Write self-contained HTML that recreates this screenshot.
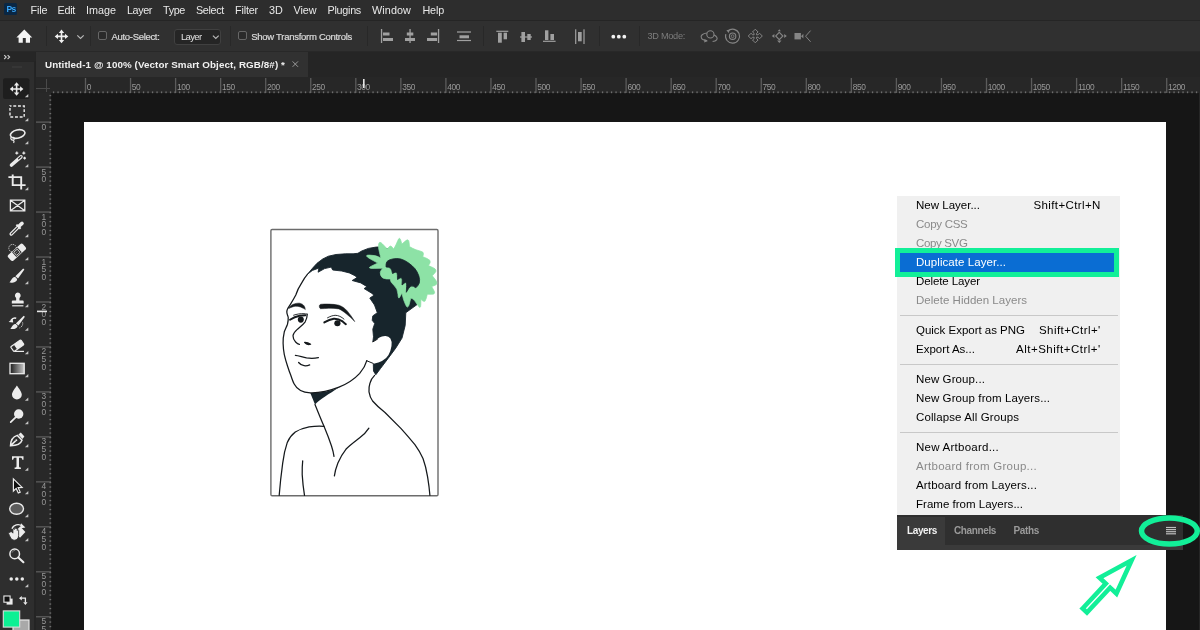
<!DOCTYPE html><html><head><meta charset="utf-8"><title>Photoshop</title><style>
*{margin:0;padding:0;box-sizing:border-box}
html,body{width:1200px;height:630px;overflow:hidden;background:#fff}
body{position:relative;font-family:"Liberation Sans",sans-serif;font-size:11px;color:#ddd}
#root{position:absolute;left:0;top:0;width:1200px;height:630px;will-change:transform}
.a{position:absolute}
.t{position:absolute;white-space:nowrap;line-height:1}
svg{position:absolute;overflow:visible}
#menubar{left:0;top:0;width:1200px;height:20px;background:#2d2d2d}
#menuline{left:0;top:20px;width:1200px;height:1px;background:#252525}
#opt{left:0;top:21px;width:1200px;height:30px;background:#303030}
#optline{left:0;top:51px;width:1200px;height:1px;background:#282828}
#tabbar{left:0;top:52px;width:1200px;height:25px;background:#252525}
#tab{left:36px;top:52px;width:272px;height:25px;background:#313131}
#tools{left:0;top:62px;width:35px;height:568px;background:#2e2e2e}
#canvas{left:35px;top:77px;width:1165px;height:553px;background:#161616}
#hr{left:35px;top:77px;width:1165px;height:16px;background:#272727}
#vr{left:35px;top:93px;width:16px;height:537px;background:#282828}
#doc{left:84px;top:122px;width:1082px;height:508px;background:#fff}
.sep{position:absolute;top:26px;width:1px;height:20px;background:#282828}
.cb{position:absolute;width:9px;height:8.6px;border:1px solid #666;border-radius:2px;top:31.4px;background:#2a2a2a}
#dd{left:173.7px;top:28.6px;width:47.8px;height:16.6px;background:#252525;border:1px solid #404040;border-radius:3px}
#pm{left:897px;top:195.5px;width:222.5px;height:320.5px;background:#f0f0f0}
.ps{position:absolute;left:899.5px;width:218px;height:1px;background:#c8c8c8}
#hl{left:894.7px;top:248.2px;width:224.3px;height:28.8px;background:#0a6dd3;border:5px solid #12ef98}
#lp{left:897px;top:515px;width:285.5px;height:34.5px;background:#2f2f2f}
#lpb{left:897px;top:545px;width:285.5px;height:4.5px;background:#3a3a3a}
#lt{left:897px;top:517px;width:48px;height:28px;background:#3a3a3a}
</style></head><body><div id="root">
<div class="a" id="menubar"></div><div class="a" id="menuline"></div><div class="a" id="opt"></div><div class="a" id="optline"></div>
<div class="a" id="tabbar"></div><div class="a" id="tab"></div><div class="a" id="canvas"></div><div class="a" id="hr"></div><div class="a" id="vr"></div><div class="a" id="tools"></div><div class="a" id="doc"></div>
<div class="a" style="left:4.2px;top:2.8px;width:13px;height:12.4px;background:#0a2744;border-radius:1.5px"></div>
<span class="t" style="left:6.60px;top:4.95px;font-size:8.5px;color:#38a6f8;letter-spacing:-0.798px;font-weight:bold;">Ps</span>
<span class="t" style="left:30.50px;top:4.52px;font-size:10.8px;color:#e8e8e8;letter-spacing:-0.100px;">File</span>
<span class="t" style="left:57.50px;top:4.52px;font-size:10.8px;color:#e8e8e8;letter-spacing:-0.277px;">Edit</span>
<span class="t" style="left:86.00px;top:4.52px;font-size:10.8px;color:#e8e8e8;letter-spacing:-0.003px;">Image</span>
<span class="t" style="left:127.00px;top:4.52px;font-size:10.8px;color:#e8e8e8;letter-spacing:-0.403px;">Layer</span>
<span class="t" style="left:163.00px;top:4.52px;font-size:10.8px;color:#e8e8e8;letter-spacing:-0.353px;">Type</span>
<span class="t" style="left:196.00px;top:4.52px;font-size:10.8px;color:#e8e8e8;letter-spacing:-0.336px;">Select</span>
<span class="t" style="left:235.00px;top:4.52px;font-size:10.8px;color:#e8e8e8;letter-spacing:-0.166px;">Filter</span>
<span class="t" style="left:269.00px;top:4.52px;font-size:10.8px;color:#e8e8e8;letter-spacing:0.097px;">3D</span>
<span class="t" style="left:293.50px;top:4.52px;font-size:10.8px;color:#e8e8e8;letter-spacing:-0.053px;">View</span>
<span class="t" style="left:327.50px;top:4.52px;font-size:10.8px;color:#e8e8e8;letter-spacing:-0.274px;">Plugins</span>
<span class="t" style="left:372.00px;top:4.52px;font-size:10.8px;color:#e8e8e8;letter-spacing:0.098px;">Window</span>
<span class="t" style="left:422.50px;top:4.52px;font-size:10.8px;color:#e8e8e8;letter-spacing:-0.178px;">Help</span>
<div class="sep" style="left:46px"></div>
<div class="sep" style="left:90px"></div>
<div class="sep" style="left:229.5px"></div>
<div class="sep" style="left:367px"></div>
<div class="sep" style="left:483px"></div>
<div class="sep" style="left:598.5px"></div>
<div class="sep" style="left:639px"></div>
<div class="cb" style="left:98px"></div><div class="cb" style="left:238px"></div>
<span class="t" style="left:111.50px;top:31.76px;font-size:9.5px;color:#dadada;letter-spacing:-0.312px;-webkit-text-stroke:0.2px #dadada;">Auto-Select:</span>
<div class="a" id="dd"></div>
<span class="t" style="left:180.90px;top:32.36px;font-size:9.5px;color:#e2e2e2;letter-spacing:-0.612px;">Layer</span>
<span class="t" style="left:251.30px;top:31.76px;font-size:9.5px;color:#dadada;letter-spacing:-0.281px;-webkit-text-stroke:0.2px #dadada;">Show Transform Controls</span>
<span class="t" style="left:647.50px;top:31.91px;font-size:9.2px;color:#7c7c7c;letter-spacing:-0.298px;">3D Mode:</span>
<span class="t" style="left:45.00px;top:59.91px;font-size:9.8px;color:#f0f0f0;letter-spacing:0.091px;font-weight:bold;">Untitled-1 @ 100% (Vector Smart Object, RGB/8#) *</span>
<svg class="a" style="left:0;top:0" width="1200" height="630" viewBox="0 0 1200 630"><g stroke="#5c5c5c" stroke-width="1.3"><line x1="85.50" y1="78" x2="85.50" y2="93"/><line x1="130.55" y1="78" x2="130.55" y2="93"/><line x1="175.60" y1="78" x2="175.60" y2="93"/><line x1="220.65" y1="78" x2="220.65" y2="93"/><line x1="265.70" y1="78" x2="265.70" y2="93"/><line x1="310.75" y1="78" x2="310.75" y2="93"/><line x1="355.80" y1="78" x2="355.80" y2="93"/><line x1="400.85" y1="78" x2="400.85" y2="93"/><line x1="445.90" y1="78" x2="445.90" y2="93"/><line x1="490.95" y1="78" x2="490.95" y2="93"/><line x1="536.00" y1="78" x2="536.00" y2="93"/><line x1="581.05" y1="78" x2="581.05" y2="93"/><line x1="626.10" y1="78" x2="626.10" y2="93"/><line x1="671.15" y1="78" x2="671.15" y2="93"/><line x1="716.20" y1="78" x2="716.20" y2="93"/><line x1="761.25" y1="78" x2="761.25" y2="93"/><line x1="806.30" y1="78" x2="806.30" y2="93"/><line x1="851.35" y1="78" x2="851.35" y2="93"/><line x1="896.40" y1="78" x2="896.40" y2="93"/><line x1="941.45" y1="78" x2="941.45" y2="93"/><line x1="986.50" y1="78" x2="986.50" y2="93"/><line x1="1031.55" y1="78" x2="1031.55" y2="93"/><line x1="1076.60" y1="78" x2="1076.60" y2="93"/><line x1="1121.65" y1="78" x2="1121.65" y2="93"/><line x1="1166.70" y1="78" x2="1166.70" y2="93"/><line x1="36" y1="122.10" x2="51" y2="122.10"/><line x1="36" y1="167.07" x2="51" y2="167.07"/><line x1="36" y1="212.04" x2="51" y2="212.04"/><line x1="36" y1="257.01" x2="51" y2="257.01"/><line x1="36" y1="301.98" x2="51" y2="301.98"/><line x1="36" y1="346.95" x2="51" y2="346.95"/><line x1="36" y1="391.92" x2="51" y2="391.92"/><line x1="36" y1="436.89" x2="51" y2="436.89"/><line x1="36" y1="481.86" x2="51" y2="481.86"/><line x1="36" y1="526.83" x2="51" y2="526.83"/><line x1="36" y1="571.80" x2="51" y2="571.80"/><line x1="36" y1="616.77" x2="51" y2="616.77"/></g><g fill="#6e6e6e"><rect x="52.9" y="91.4" width="1.3" height="1.8"/><rect x="57.4" y="91.4" width="1.3" height="1.8"/><rect x="61.9" y="91.4" width="1.3" height="1.8"/><rect x="66.4" y="91.4" width="1.3" height="1.8"/><rect x="70.9" y="91.4" width="1.3" height="1.8"/><rect x="75.4" y="91.4" width="1.3" height="1.8"/><rect x="79.9" y="91.4" width="1.3" height="1.8"/><rect x="84.4" y="91.4" width="1.3" height="1.8"/><rect x="88.9" y="91.4" width="1.3" height="1.8"/><rect x="93.4" y="91.4" width="1.3" height="1.8"/><rect x="97.9" y="91.4" width="1.3" height="1.8"/><rect x="102.4" y="91.4" width="1.3" height="1.8"/><rect x="106.9" y="91.4" width="1.3" height="1.8"/><rect x="111.4" y="91.4" width="1.3" height="1.8"/><rect x="115.9" y="91.4" width="1.3" height="1.8"/><rect x="120.4" y="91.4" width="1.3" height="1.8"/><rect x="124.9" y="91.4" width="1.3" height="1.8"/><rect x="129.4" y="91.4" width="1.3" height="1.8"/><rect x="133.9" y="91.4" width="1.3" height="1.8"/><rect x="138.4" y="91.4" width="1.3" height="1.8"/><rect x="142.9" y="91.4" width="1.3" height="1.8"/><rect x="147.4" y="91.4" width="1.3" height="1.8"/><rect x="151.9" y="91.4" width="1.3" height="1.8"/><rect x="156.4" y="91.4" width="1.3" height="1.8"/><rect x="160.9" y="91.4" width="1.3" height="1.8"/><rect x="165.4" y="91.4" width="1.3" height="1.8"/><rect x="169.9" y="91.4" width="1.3" height="1.8"/><rect x="174.4" y="91.4" width="1.3" height="1.8"/><rect x="178.9" y="91.4" width="1.3" height="1.8"/><rect x="183.4" y="91.4" width="1.3" height="1.8"/><rect x="187.9" y="91.4" width="1.3" height="1.8"/><rect x="192.4" y="91.4" width="1.3" height="1.8"/><rect x="196.9" y="91.4" width="1.3" height="1.8"/><rect x="201.4" y="91.4" width="1.3" height="1.8"/><rect x="205.9" y="91.4" width="1.3" height="1.8"/><rect x="210.4" y="91.4" width="1.3" height="1.8"/><rect x="214.9" y="91.4" width="1.3" height="1.8"/><rect x="219.4" y="91.4" width="1.3" height="1.8"/><rect x="223.9" y="91.4" width="1.3" height="1.8"/><rect x="228.4" y="91.4" width="1.3" height="1.8"/><rect x="232.9" y="91.4" width="1.3" height="1.8"/><rect x="237.4" y="91.4" width="1.3" height="1.8"/><rect x="241.9" y="91.4" width="1.3" height="1.8"/><rect x="246.4" y="91.4" width="1.3" height="1.8"/><rect x="250.9" y="91.4" width="1.3" height="1.8"/><rect x="255.4" y="91.4" width="1.3" height="1.8"/><rect x="259.9" y="91.4" width="1.3" height="1.8"/><rect x="264.4" y="91.4" width="1.3" height="1.8"/><rect x="268.9" y="91.4" width="1.3" height="1.8"/><rect x="273.4" y="91.4" width="1.3" height="1.8"/><rect x="277.9" y="91.4" width="1.3" height="1.8"/><rect x="282.4" y="91.4" width="1.3" height="1.8"/><rect x="286.9" y="91.4" width="1.3" height="1.8"/><rect x="291.4" y="91.4" width="1.3" height="1.8"/><rect x="295.9" y="91.4" width="1.3" height="1.8"/><rect x="300.4" y="91.4" width="1.3" height="1.8"/><rect x="304.9" y="91.4" width="1.3" height="1.8"/><rect x="309.4" y="91.4" width="1.3" height="1.8"/><rect x="313.9" y="91.4" width="1.3" height="1.8"/><rect x="318.4" y="91.4" width="1.3" height="1.8"/><rect x="322.9" y="91.4" width="1.3" height="1.8"/><rect x="327.4" y="91.4" width="1.3" height="1.8"/><rect x="331.9" y="91.4" width="1.3" height="1.8"/><rect x="336.4" y="91.4" width="1.3" height="1.8"/><rect x="340.9" y="91.4" width="1.3" height="1.8"/><rect x="345.4" y="91.4" width="1.3" height="1.8"/><rect x="349.9" y="91.4" width="1.3" height="1.8"/><rect x="354.4" y="91.4" width="1.3" height="1.8"/><rect x="358.9" y="91.4" width="1.3" height="1.8"/><rect x="363.4" y="91.4" width="1.3" height="1.8"/><rect x="367.9" y="91.4" width="1.3" height="1.8"/><rect x="372.4" y="91.4" width="1.3" height="1.8"/><rect x="376.9" y="91.4" width="1.3" height="1.8"/><rect x="381.4" y="91.4" width="1.3" height="1.8"/><rect x="385.9" y="91.4" width="1.3" height="1.8"/><rect x="390.4" y="91.4" width="1.3" height="1.8"/><rect x="394.9" y="91.4" width="1.3" height="1.8"/><rect x="399.4" y="91.4" width="1.3" height="1.8"/><rect x="403.9" y="91.4" width="1.3" height="1.8"/><rect x="408.4" y="91.4" width="1.3" height="1.8"/><rect x="412.9" y="91.4" width="1.3" height="1.8"/><rect x="417.4" y="91.4" width="1.3" height="1.8"/><rect x="421.9" y="91.4" width="1.3" height="1.8"/><rect x="426.4" y="91.4" width="1.3" height="1.8"/><rect x="430.9" y="91.4" width="1.3" height="1.8"/><rect x="435.4" y="91.4" width="1.3" height="1.8"/><rect x="439.9" y="91.4" width="1.3" height="1.8"/><rect x="444.4" y="91.4" width="1.3" height="1.8"/><rect x="448.9" y="91.4" width="1.3" height="1.8"/><rect x="453.4" y="91.4" width="1.3" height="1.8"/><rect x="457.9" y="91.4" width="1.3" height="1.8"/><rect x="462.4" y="91.4" width="1.3" height="1.8"/><rect x="466.9" y="91.4" width="1.3" height="1.8"/><rect x="471.4" y="91.4" width="1.3" height="1.8"/><rect x="475.9" y="91.4" width="1.3" height="1.8"/><rect x="480.4" y="91.4" width="1.3" height="1.8"/><rect x="484.9" y="91.4" width="1.3" height="1.8"/><rect x="489.4" y="91.4" width="1.3" height="1.8"/><rect x="493.9" y="91.4" width="1.3" height="1.8"/><rect x="498.4" y="91.4" width="1.3" height="1.8"/><rect x="502.9" y="91.4" width="1.3" height="1.8"/><rect x="507.4" y="91.4" width="1.3" height="1.8"/><rect x="511.9" y="91.4" width="1.3" height="1.8"/><rect x="516.4" y="91.4" width="1.3" height="1.8"/><rect x="520.9" y="91.4" width="1.3" height="1.8"/><rect x="525.4" y="91.4" width="1.3" height="1.8"/><rect x="529.9" y="91.4" width="1.3" height="1.8"/><rect x="534.4" y="91.4" width="1.3" height="1.8"/><rect x="538.9" y="91.4" width="1.3" height="1.8"/><rect x="543.4" y="91.4" width="1.3" height="1.8"/><rect x="547.9" y="91.4" width="1.3" height="1.8"/><rect x="552.4" y="91.4" width="1.3" height="1.8"/><rect x="556.9" y="91.4" width="1.3" height="1.8"/><rect x="561.4" y="91.4" width="1.3" height="1.8"/><rect x="565.9" y="91.4" width="1.3" height="1.8"/><rect x="570.4" y="91.4" width="1.3" height="1.8"/><rect x="574.9" y="91.4" width="1.3" height="1.8"/><rect x="579.4" y="91.4" width="1.3" height="1.8"/><rect x="583.9" y="91.4" width="1.3" height="1.8"/><rect x="588.4" y="91.4" width="1.3" height="1.8"/><rect x="592.9" y="91.4" width="1.3" height="1.8"/><rect x="597.4" y="91.4" width="1.3" height="1.8"/><rect x="601.9" y="91.4" width="1.3" height="1.8"/><rect x="606.4" y="91.4" width="1.3" height="1.8"/><rect x="610.9" y="91.4" width="1.3" height="1.8"/><rect x="615.4" y="91.4" width="1.3" height="1.8"/><rect x="619.9" y="91.4" width="1.3" height="1.8"/><rect x="624.4" y="91.4" width="1.3" height="1.8"/><rect x="628.9" y="91.4" width="1.3" height="1.8"/><rect x="633.4" y="91.4" width="1.3" height="1.8"/><rect x="637.9" y="91.4" width="1.3" height="1.8"/><rect x="642.4" y="91.4" width="1.3" height="1.8"/><rect x="646.9" y="91.4" width="1.3" height="1.8"/><rect x="651.4" y="91.4" width="1.3" height="1.8"/><rect x="655.9" y="91.4" width="1.3" height="1.8"/><rect x="660.4" y="91.4" width="1.3" height="1.8"/><rect x="664.9" y="91.4" width="1.3" height="1.8"/><rect x="669.4" y="91.4" width="1.3" height="1.8"/><rect x="673.9" y="91.4" width="1.3" height="1.8"/><rect x="678.4" y="91.4" width="1.3" height="1.8"/><rect x="682.9" y="91.4" width="1.3" height="1.8"/><rect x="687.4" y="91.4" width="1.3" height="1.8"/><rect x="691.9" y="91.4" width="1.3" height="1.8"/><rect x="696.4" y="91.4" width="1.3" height="1.8"/><rect x="700.9" y="91.4" width="1.3" height="1.8"/><rect x="705.4" y="91.4" width="1.3" height="1.8"/><rect x="709.9" y="91.4" width="1.3" height="1.8"/><rect x="714.4" y="91.4" width="1.3" height="1.8"/><rect x="718.9" y="91.4" width="1.3" height="1.8"/><rect x="723.4" y="91.4" width="1.3" height="1.8"/><rect x="727.9" y="91.4" width="1.3" height="1.8"/><rect x="732.4" y="91.4" width="1.3" height="1.8"/><rect x="736.9" y="91.4" width="1.3" height="1.8"/><rect x="741.4" y="91.4" width="1.3" height="1.8"/><rect x="745.9" y="91.4" width="1.3" height="1.8"/><rect x="750.4" y="91.4" width="1.3" height="1.8"/><rect x="754.9" y="91.4" width="1.3" height="1.8"/><rect x="759.4" y="91.4" width="1.3" height="1.8"/><rect x="763.9" y="91.4" width="1.3" height="1.8"/><rect x="768.4" y="91.4" width="1.3" height="1.8"/><rect x="772.9" y="91.4" width="1.3" height="1.8"/><rect x="777.4" y="91.4" width="1.3" height="1.8"/><rect x="781.9" y="91.4" width="1.3" height="1.8"/><rect x="786.4" y="91.4" width="1.3" height="1.8"/><rect x="790.9" y="91.4" width="1.3" height="1.8"/><rect x="795.4" y="91.4" width="1.3" height="1.8"/><rect x="799.9" y="91.4" width="1.3" height="1.8"/><rect x="804.4" y="91.4" width="1.3" height="1.8"/><rect x="808.9" y="91.4" width="1.3" height="1.8"/><rect x="813.4" y="91.4" width="1.3" height="1.8"/><rect x="817.9" y="91.4" width="1.3" height="1.8"/><rect x="822.4" y="91.4" width="1.3" height="1.8"/><rect x="826.9" y="91.4" width="1.3" height="1.8"/><rect x="831.4" y="91.4" width="1.3" height="1.8"/><rect x="835.9" y="91.4" width="1.3" height="1.8"/><rect x="840.4" y="91.4" width="1.3" height="1.8"/><rect x="844.9" y="91.4" width="1.3" height="1.8"/><rect x="849.4" y="91.4" width="1.3" height="1.8"/><rect x="853.9" y="91.4" width="1.3" height="1.8"/><rect x="858.4" y="91.4" width="1.3" height="1.8"/><rect x="862.9" y="91.4" width="1.3" height="1.8"/><rect x="867.4" y="91.4" width="1.3" height="1.8"/><rect x="871.9" y="91.4" width="1.3" height="1.8"/><rect x="876.4" y="91.4" width="1.3" height="1.8"/><rect x="880.9" y="91.4" width="1.3" height="1.8"/><rect x="885.4" y="91.4" width="1.3" height="1.8"/><rect x="889.9" y="91.4" width="1.3" height="1.8"/><rect x="894.4" y="91.4" width="1.3" height="1.8"/><rect x="898.9" y="91.4" width="1.3" height="1.8"/><rect x="903.4" y="91.4" width="1.3" height="1.8"/><rect x="907.9" y="91.4" width="1.3" height="1.8"/><rect x="912.4" y="91.4" width="1.3" height="1.8"/><rect x="916.9" y="91.4" width="1.3" height="1.8"/><rect x="921.4" y="91.4" width="1.3" height="1.8"/><rect x="925.9" y="91.4" width="1.3" height="1.8"/><rect x="930.4" y="91.4" width="1.3" height="1.8"/><rect x="934.9" y="91.4" width="1.3" height="1.8"/><rect x="939.4" y="91.4" width="1.3" height="1.8"/><rect x="943.9" y="91.4" width="1.3" height="1.8"/><rect x="948.4" y="91.4" width="1.3" height="1.8"/><rect x="952.9" y="91.4" width="1.3" height="1.8"/><rect x="957.4" y="91.4" width="1.3" height="1.8"/><rect x="961.9" y="91.4" width="1.3" height="1.8"/><rect x="966.4" y="91.4" width="1.3" height="1.8"/><rect x="970.9" y="91.4" width="1.3" height="1.8"/><rect x="975.4" y="91.4" width="1.3" height="1.8"/><rect x="979.9" y="91.4" width="1.3" height="1.8"/><rect x="984.4" y="91.4" width="1.3" height="1.8"/><rect x="988.9" y="91.4" width="1.3" height="1.8"/><rect x="993.4" y="91.4" width="1.3" height="1.8"/><rect x="997.9" y="91.4" width="1.3" height="1.8"/><rect x="1002.4" y="91.4" width="1.3" height="1.8"/><rect x="1006.9" y="91.4" width="1.3" height="1.8"/><rect x="1011.4" y="91.4" width="1.3" height="1.8"/><rect x="1015.9" y="91.4" width="1.3" height="1.8"/><rect x="1020.4" y="91.4" width="1.3" height="1.8"/><rect x="1024.9" y="91.4" width="1.3" height="1.8"/><rect x="1029.4" y="91.4" width="1.3" height="1.8"/><rect x="1033.9" y="91.4" width="1.3" height="1.8"/><rect x="1038.4" y="91.4" width="1.3" height="1.8"/><rect x="1042.9" y="91.4" width="1.3" height="1.8"/><rect x="1047.4" y="91.4" width="1.3" height="1.8"/><rect x="1051.9" y="91.4" width="1.3" height="1.8"/><rect x="1056.4" y="91.4" width="1.3" height="1.8"/><rect x="1060.9" y="91.4" width="1.3" height="1.8"/><rect x="1065.4" y="91.4" width="1.3" height="1.8"/><rect x="1069.9" y="91.4" width="1.3" height="1.8"/><rect x="1074.4" y="91.4" width="1.3" height="1.8"/><rect x="1078.9" y="91.4" width="1.3" height="1.8"/><rect x="1083.4" y="91.4" width="1.3" height="1.8"/><rect x="1087.9" y="91.4" width="1.3" height="1.8"/><rect x="1092.4" y="91.4" width="1.3" height="1.8"/><rect x="1096.9" y="91.4" width="1.3" height="1.8"/><rect x="1101.4" y="91.4" width="1.3" height="1.8"/><rect x="1105.9" y="91.4" width="1.3" height="1.8"/><rect x="1110.4" y="91.4" width="1.3" height="1.8"/><rect x="1114.9" y="91.4" width="1.3" height="1.8"/><rect x="1119.4" y="91.4" width="1.3" height="1.8"/><rect x="1123.9" y="91.4" width="1.3" height="1.8"/><rect x="1128.4" y="91.4" width="1.3" height="1.8"/><rect x="1132.9" y="91.4" width="1.3" height="1.8"/><rect x="1137.4" y="91.4" width="1.3" height="1.8"/><rect x="1141.9" y="91.4" width="1.3" height="1.8"/><rect x="1146.4" y="91.4" width="1.3" height="1.8"/><rect x="1150.9" y="91.4" width="1.3" height="1.8"/><rect x="1155.4" y="91.4" width="1.3" height="1.8"/><rect x="1159.9" y="91.4" width="1.3" height="1.8"/><rect x="1164.4" y="91.4" width="1.3" height="1.8"/><rect x="1168.9" y="91.4" width="1.3" height="1.8"/><rect x="1173.4" y="91.4" width="1.3" height="1.8"/><rect x="1177.9" y="91.4" width="1.3" height="1.8"/><rect x="1182.4" y="91.4" width="1.3" height="1.8"/><rect x="1186.9" y="91.4" width="1.3" height="1.8"/><rect x="1191.4" y="91.4" width="1.3" height="1.8"/><rect x="1195.9" y="91.4" width="1.3" height="1.8"/><rect x="49.4" y="94.9" width="1.8" height="1.3"/><rect x="49.4" y="99.4" width="1.8" height="1.3"/><rect x="49.4" y="103.9" width="1.8" height="1.3"/><rect x="49.4" y="108.4" width="1.8" height="1.3"/><rect x="49.4" y="112.9" width="1.8" height="1.3"/><rect x="49.4" y="117.4" width="1.8" height="1.3"/><rect x="49.4" y="121.9" width="1.8" height="1.3"/><rect x="49.4" y="126.4" width="1.8" height="1.3"/><rect x="49.4" y="130.9" width="1.8" height="1.3"/><rect x="49.4" y="135.4" width="1.8" height="1.3"/><rect x="49.4" y="139.9" width="1.8" height="1.3"/><rect x="49.4" y="144.4" width="1.8" height="1.3"/><rect x="49.4" y="148.9" width="1.8" height="1.3"/><rect x="49.4" y="153.4" width="1.8" height="1.3"/><rect x="49.4" y="157.9" width="1.8" height="1.3"/><rect x="49.4" y="162.4" width="1.8" height="1.3"/><rect x="49.4" y="166.9" width="1.8" height="1.3"/><rect x="49.4" y="171.4" width="1.8" height="1.3"/><rect x="49.4" y="175.9" width="1.8" height="1.3"/><rect x="49.4" y="180.4" width="1.8" height="1.3"/><rect x="49.4" y="184.9" width="1.8" height="1.3"/><rect x="49.4" y="189.4" width="1.8" height="1.3"/><rect x="49.4" y="193.9" width="1.8" height="1.3"/><rect x="49.4" y="198.4" width="1.8" height="1.3"/><rect x="49.4" y="202.9" width="1.8" height="1.3"/><rect x="49.4" y="207.4" width="1.8" height="1.3"/><rect x="49.4" y="211.9" width="1.8" height="1.3"/><rect x="49.4" y="216.4" width="1.8" height="1.3"/><rect x="49.4" y="220.9" width="1.8" height="1.3"/><rect x="49.4" y="225.4" width="1.8" height="1.3"/><rect x="49.4" y="229.9" width="1.8" height="1.3"/><rect x="49.4" y="234.4" width="1.8" height="1.3"/><rect x="49.4" y="238.9" width="1.8" height="1.3"/><rect x="49.4" y="243.4" width="1.8" height="1.3"/><rect x="49.4" y="247.9" width="1.8" height="1.3"/><rect x="49.4" y="252.4" width="1.8" height="1.3"/><rect x="49.4" y="256.9" width="1.8" height="1.3"/><rect x="49.4" y="261.4" width="1.8" height="1.3"/><rect x="49.4" y="265.9" width="1.8" height="1.3"/><rect x="49.4" y="270.4" width="1.8" height="1.3"/><rect x="49.4" y="274.9" width="1.8" height="1.3"/><rect x="49.4" y="279.4" width="1.8" height="1.3"/><rect x="49.4" y="283.9" width="1.8" height="1.3"/><rect x="49.4" y="288.4" width="1.8" height="1.3"/><rect x="49.4" y="292.9" width="1.8" height="1.3"/><rect x="49.4" y="297.4" width="1.8" height="1.3"/><rect x="49.4" y="301.9" width="1.8" height="1.3"/><rect x="49.4" y="306.4" width="1.8" height="1.3"/><rect x="49.4" y="310.9" width="1.8" height="1.3"/><rect x="49.4" y="315.4" width="1.8" height="1.3"/><rect x="49.4" y="319.9" width="1.8" height="1.3"/><rect x="49.4" y="324.4" width="1.8" height="1.3"/><rect x="49.4" y="328.9" width="1.8" height="1.3"/><rect x="49.4" y="333.4" width="1.8" height="1.3"/><rect x="49.4" y="337.9" width="1.8" height="1.3"/><rect x="49.4" y="342.4" width="1.8" height="1.3"/><rect x="49.4" y="346.9" width="1.8" height="1.3"/><rect x="49.4" y="351.4" width="1.8" height="1.3"/><rect x="49.4" y="355.9" width="1.8" height="1.3"/><rect x="49.4" y="360.4" width="1.8" height="1.3"/><rect x="49.4" y="364.9" width="1.8" height="1.3"/><rect x="49.4" y="369.4" width="1.8" height="1.3"/><rect x="49.4" y="373.9" width="1.8" height="1.3"/><rect x="49.4" y="378.4" width="1.8" height="1.3"/><rect x="49.4" y="382.9" width="1.8" height="1.3"/><rect x="49.4" y="387.4" width="1.8" height="1.3"/><rect x="49.4" y="391.9" width="1.8" height="1.3"/><rect x="49.4" y="396.4" width="1.8" height="1.3"/><rect x="49.4" y="400.9" width="1.8" height="1.3"/><rect x="49.4" y="405.4" width="1.8" height="1.3"/><rect x="49.4" y="409.9" width="1.8" height="1.3"/><rect x="49.4" y="414.4" width="1.8" height="1.3"/><rect x="49.4" y="418.9" width="1.8" height="1.3"/><rect x="49.4" y="423.4" width="1.8" height="1.3"/><rect x="49.4" y="427.9" width="1.8" height="1.3"/><rect x="49.4" y="432.4" width="1.8" height="1.3"/><rect x="49.4" y="436.9" width="1.8" height="1.3"/><rect x="49.4" y="441.4" width="1.8" height="1.3"/><rect x="49.4" y="445.9" width="1.8" height="1.3"/><rect x="49.4" y="450.4" width="1.8" height="1.3"/><rect x="49.4" y="454.9" width="1.8" height="1.3"/><rect x="49.4" y="459.4" width="1.8" height="1.3"/><rect x="49.4" y="463.9" width="1.8" height="1.3"/><rect x="49.4" y="468.4" width="1.8" height="1.3"/><rect x="49.4" y="472.9" width="1.8" height="1.3"/><rect x="49.4" y="477.4" width="1.8" height="1.3"/><rect x="49.4" y="481.9" width="1.8" height="1.3"/><rect x="49.4" y="486.4" width="1.8" height="1.3"/><rect x="49.4" y="490.9" width="1.8" height="1.3"/><rect x="49.4" y="495.4" width="1.8" height="1.3"/><rect x="49.4" y="499.9" width="1.8" height="1.3"/><rect x="49.4" y="504.4" width="1.8" height="1.3"/><rect x="49.4" y="508.9" width="1.8" height="1.3"/><rect x="49.4" y="513.4" width="1.8" height="1.3"/><rect x="49.4" y="517.9" width="1.8" height="1.3"/><rect x="49.4" y="522.4" width="1.8" height="1.3"/><rect x="49.4" y="526.9" width="1.8" height="1.3"/><rect x="49.4" y="531.4" width="1.8" height="1.3"/><rect x="49.4" y="535.9" width="1.8" height="1.3"/><rect x="49.4" y="540.4" width="1.8" height="1.3"/><rect x="49.4" y="544.9" width="1.8" height="1.3"/><rect x="49.4" y="549.4" width="1.8" height="1.3"/><rect x="49.4" y="553.9" width="1.8" height="1.3"/><rect x="49.4" y="558.4" width="1.8" height="1.3"/><rect x="49.4" y="562.9" width="1.8" height="1.3"/><rect x="49.4" y="567.4" width="1.8" height="1.3"/><rect x="49.4" y="571.9" width="1.8" height="1.3"/><rect x="49.4" y="576.4" width="1.8" height="1.3"/><rect x="49.4" y="580.9" width="1.8" height="1.3"/><rect x="49.4" y="585.4" width="1.8" height="1.3"/><rect x="49.4" y="589.9" width="1.8" height="1.3"/><rect x="49.4" y="594.4" width="1.8" height="1.3"/><rect x="49.4" y="598.9" width="1.8" height="1.3"/><rect x="49.4" y="603.4" width="1.8" height="1.3"/><rect x="49.4" y="607.9" width="1.8" height="1.3"/><rect x="49.4" y="612.4" width="1.8" height="1.3"/><rect x="49.4" y="616.9" width="1.8" height="1.3"/><rect x="49.4" y="621.4" width="1.8" height="1.3"/><rect x="49.4" y="625.9" width="1.8" height="1.3"/></g><g stroke="#4a4a4a" stroke-width="1"><line x1="36" y1="88.5" x2="50" y2="88.5"/><line x1="46.5" y1="79" x2="46.5" y2="92"/></g><g fill="#989898" font-family="Liberation Sans, sans-serif" font-size="8.4"><text x="86.80" y="89.8" letter-spacing="-0.4">0</text><text x="131.85" y="89.8" letter-spacing="-0.4">50</text><text x="176.90" y="89.8" letter-spacing="-0.4">100</text><text x="221.95" y="89.8" letter-spacing="-0.4">150</text><text x="267.00" y="89.8" letter-spacing="-0.4">200</text><text x="312.05" y="89.8" letter-spacing="-0.4">250</text><text x="357.10" y="89.8" letter-spacing="-0.4">300</text><text x="402.15" y="89.8" letter-spacing="-0.4">350</text><text x="447.20" y="89.8" letter-spacing="-0.4">400</text><text x="492.25" y="89.8" letter-spacing="-0.4">450</text><text x="537.30" y="89.8" letter-spacing="-0.4">500</text><text x="582.35" y="89.8" letter-spacing="-0.4">550</text><text x="627.40" y="89.8" letter-spacing="-0.4">600</text><text x="672.45" y="89.8" letter-spacing="-0.4">650</text><text x="717.50" y="89.8" letter-spacing="-0.4">700</text><text x="762.55" y="89.8" letter-spacing="-0.4">750</text><text x="807.60" y="89.8" letter-spacing="-0.4">800</text><text x="852.65" y="89.8" letter-spacing="-0.4">850</text><text x="897.70" y="89.8" letter-spacing="-0.4">900</text><text x="942.75" y="89.8" letter-spacing="-0.4">950</text><text x="987.80" y="89.8" letter-spacing="-0.4">1000</text><text x="1032.85" y="89.8" letter-spacing="-0.4">1050</text><text x="1077.90" y="89.8" letter-spacing="-0.4">1100</text><text x="1122.95" y="89.8" letter-spacing="-0.4">1150</text><text x="1168.00" y="89.8" letter-spacing="-0.4">1200</text><text x="41.5" y="129.6">0</text><text x="41.5" y="174.6">5</text><text x="41.5" y="182.2">0</text><text x="41.5" y="219.5">1</text><text x="41.5" y="227.2">0</text><text x="41.5" y="234.8">0</text><text x="41.5" y="264.5">1</text><text x="41.5" y="272.2">5</text><text x="41.5" y="279.8">0</text><text x="41.5" y="309.5">2</text><text x="41.5" y="317.1">0</text><text x="41.5" y="324.8">0</text><text x="41.5" y="354.4">2</text><text x="41.5" y="362.1">5</text><text x="41.5" y="369.8">0</text><text x="41.5" y="399.4">3</text><text x="41.5" y="407.1">0</text><text x="41.5" y="414.7">0</text><text x="41.5" y="444.4">3</text><text x="41.5" y="452.0">5</text><text x="41.5" y="459.7">0</text><text x="41.5" y="489.4">4</text><text x="41.5" y="497.0">0</text><text x="41.5" y="504.7">0</text><text x="41.5" y="534.3">4</text><text x="41.5" y="542.0">5</text><text x="41.5" y="549.6">0</text><text x="41.5" y="579.3">5</text><text x="41.5" y="586.9">0</text><text x="41.5" y="594.6">0</text><text x="41.5" y="624.3">5</text><text x="41.5" y="631.9">5</text><text x="41.5" y="639.6">0</text></g><rect x="363" y="79" width="1.6" height="9" fill="#e8e8e8"/><rect x="37" y="310.6" width="10" height="1.6" fill="#e8e8e8"/></svg>
<svg class="a" style="left:0;top:0" width="60" height="630" viewBox="0 0 60 630"><rect x="0" y="52" width="35" height="9.5" fill="#262626"/><rect x="34" y="61.5" width="1.6" height="570" fill="#242424"/><rect x="12" y="66.4" width="10" height="1.2" fill="#3c3c3c"/><rect x="3" y="78.3" width="26.5" height="20.6" rx="2" fill="#1e1e1e"/><path d="M4.2 55.2 l2 1.9 -2 1.9 M7.6 55.2 l2 1.9 -2 1.9" fill="none" stroke="#d0d0d0" stroke-width="1.1"/><path d="M28.3 94 v3.2 h-3.4z" fill="#c4c4c4"/><path d="M28.3 118 v3.2 h-3.4z" fill="#c4c4c4"/><path d="M28.3 141 v3.2 h-3.4z" fill="#c4c4c4"/><path d="M28.3 164 v3.2 h-3.4z" fill="#c4c4c4"/><path d="M28.3 187 v3.2 h-3.4z" fill="#c4c4c4"/><path d="M28.3 234 v3.2 h-3.4z" fill="#c4c4c4"/><path d="M28.3 257 v3.2 h-3.4z" fill="#c4c4c4"/><path d="M28.3 281 v3.2 h-3.4z" fill="#c4c4c4"/><path d="M28.3 304 v3.2 h-3.4z" fill="#c4c4c4"/><path d="M28.3 327.5 v3.2 h-3.4z" fill="#c4c4c4"/><path d="M28.3 351 v3.2 h-3.4z" fill="#c4c4c4"/><path d="M28.3 374 v3.2 h-3.4z" fill="#c4c4c4"/><path d="M28.3 397.5 v3.2 h-3.4z" fill="#c4c4c4"/><path d="M28.3 421 v3.2 h-3.4z" fill="#c4c4c4"/><path d="M28.3 444 v3.2 h-3.4z" fill="#c4c4c4"/><path d="M28.3 467.5 v3.2 h-3.4z" fill="#c4c4c4"/><path d="M28.3 491 v3.2 h-3.4z" fill="#c4c4c4"/><path d="M28.3 514 v3.2 h-3.4z" fill="#c4c4c4"/><path d="M28.3 538 v3.2 h-3.4z" fill="#c4c4c4"/><path d="M28.3 584 v3.2 h-3.4z" fill="#c4c4c4"/><g fill="#ececec" stroke="none"><path d="M16.6 82.2 l2.7 3.3 h-1.9 v2.7 h2.7 v-1.9 l3.3 2.7 -3.3 2.7 v-1.9 h-2.7 v2.7 h1.9 l-2.7 3.3 -2.7-3.3 h1.9 v-2.7 h-2.7 v1.9 l-3.3-2.7 3.3-2.7 v1.9 h2.7 v-2.7 h-1.9z"/><path d="M16.9 385.5 C15.2 388.2 12 391.8 12 394.7 a4.9 4.8 0 0 0 9.8 0 C21.8 391.8 18.6 388.2 16.9 385.5z"/><circle cx="18.7" cy="414" r="4.7"/><circle cx="11.2" cy="579" r="1.75"/><circle cx="16.8" cy="579" r="1.75"/><circle cx="22.3" cy="579" r="1.75"/><path d="M23.2 268.6 l1.2 1 -6.4 8.8 -2.6-2.1z"/><path d="M15.2 277 c-2.6-0.6-3.4 2-5.7 5.6 c3.6 0.5 7.6-0.6 7.6-3.6z"/><path d="M23.7 315.8 l1.2 1 -6.4 8.8 -2.6-2.1z"/><path d="M15.7 324 c-2.4-0.6-3.2 1.8-5.3 5.0 c3.4 0.5 7.2-0.5 7.2-3.3z"/><path d="M8.6 322 l4-3.5 0.6 3.9z"/><path transform="translate(0.8 0)" d="M17 292.6 a2.9 2.9 0 0 1 2 5 c-0.5 0.7-0.6 1.6-0.3 2.8 h3.2 a1 1 0 0 1 1 1 v2.2 h-11.9 v-2.2 a1 1 0 0 1 1-1 h3.3 c0.3-1.2 0.2-2.1-0.3-2.8 a2.9 2.9 0 0 1 2-5z"/><rect x="12.2" y="305.2" width="11.2" height="1.2"/><path d="M12 456.2 h11.5 v3.6 h-1.2 c-0.2-1.4-0.8-2-2-2 h-1.3 v8.4 c0 0.9 0.5 1.3 1.9 1.4 v1.3 h-6.3 v-1.3 c1.4-0.1 1.9-0.5 1.9-1.4 v-8.4 h-1.3 c-1.2 0-1.8 0.6-2 2 h-1.2z"/></g><g fill="none" stroke="#ececec"><rect x="10" y="106" width="14.2" height="11" stroke-width="1.4" stroke-dasharray="2.9 1.8" stroke-dashoffset="1.4"/><ellipse cx="17.7" cy="134" rx="7.4" ry="4.1" transform="rotate(-13 17.7 134)" stroke-width="1.6"/><path d="M11.2 137.2 c-1.2 1.6 0.6 3.6 2.6 2.6 c1.4-0.9 0.4-2.8-1.2-2.2 M13.4 140.2 c0.8 1 0.8 2 0.2 2.8" stroke-width="1.2"/><path d="M11.5 165 L20.9 156.8" stroke-width="3.6" stroke-linecap="round"/><path d="M18.6 158.8 L20.9 156.8" stroke="#2e2e2e" stroke-width="1.3" stroke-linecap="round"/><path d="M16.8 151.6 v3 M15.3 153.1 h3 M23.8 151.6 v3 M22.3 153.1 h3 M24.6 156.8 v2.8 M23.2 158.2 h2.8" stroke-width="1.2"/><path d="M12.7 174.5 V185.1 H25.6 M8.4 177.1 H21.2 V189.6" stroke-width="1.9"/><path d="M10.4 200.2 h14.4 v10.6 h-14.4z M10.4 200.2 l14.4 10.6 M24.8 200.2 l-14.4 10.6" stroke-width="1.3"/><path d="M11.2 234 L17.8 227.4" stroke-width="3.5" stroke-linecap="round"/><path d="M11.4 233.8 L17.6 227.6" stroke="#2e2e2e" stroke-width="1.2" stroke-linecap="round"/><path d="M16.4 224.6 L20.6 228.8" stroke-width="2"/><path d="M19.4 225.8 L22 223.4" stroke-width="3.6" stroke-linecap="round"/><circle cx="12.6" cy="248.2" r="3.8" stroke-width="0.9" stroke-dasharray="1.2 1"/><g transform="rotate(-42 16.9 252.3)"><rect x="7" y="248.5" width="19.8" height="7.6" rx="2" fill="#ececec" stroke="none"/><rect x="13.3" y="249.1" width="7.2" height="6.4" fill="#2e2e2e" stroke="none"/><rect x="14.6" y="250.2" width="4.6" height="4.2" stroke-width="0.8"/><path d="M16.5 252.3 h0.8" stroke-width="0.9"/></g><path d="M11 320.4 c1.2-1.9 3.2-2.6 5.2-2.1" stroke-width="1.5"/><path d="M22.6 322.5 c0.6 2-0.6 4.4-3 5.4" stroke-width="1" stroke-dasharray="1 1"/><g transform="rotate(-35 17.2 345.6)"><rect x="11" y="342.8" width="12.4" height="5.8" rx="0.8" stroke-width="1.2"/><rect x="15" y="342.8" width="8.4" height="5.8" rx="0.8" fill="#ececec" stroke="none"/></g><path d="M14.4 351.4 H24" stroke-width="1.2"/><rect x="10" y="363.3" width="14.2" height="10.4" fill="url(#tg)" stroke-width="1.3"/><path d="M15.6 417.3 L10.7 422.1" stroke-width="1.7" stroke-linecap="round"/><path d="M10.5 445.7 C10.6 441.2 12.6 436.8 17.3 435.4 L22 440.2 C20.6 444.4 16 445.6 10.5 445.7z M10.8 445.4 L15.6 440.9" stroke-width="1.5"/><circle cx="16.3" cy="440.2" r="1" fill="#ececec" stroke="none"/><path d="M18.4 434.4 l2.4-1.9 3.6 4 -2 2.4z" fill="#ececec" stroke="none"/><path d="M13.4 478.9 V491 l2.8-2.6 2.1 4.6 1.9-0.9 -2.1-4.5 4-0.2z" fill="#111" stroke-width="1.2" stroke-linejoin="miter"/><ellipse cx="16.6" cy="508.8" rx="6.9" ry="5.5" fill="#5c5c5c" stroke-width="1.4"/><path d="M12 528.8 C13.4 524.6 18.6 523.4 22.2 526" stroke-width="1.4"/><path d="M21 523.2 l4.4 4.2 -5.4 1.2z" fill="#ececec" stroke="none"/><path d="M20.2 526.6 l5.2 5.3 -5.4 5.9 -5.4-5.7z" fill="#ececec" stroke="none"/><g transform="translate(14.6 534.6) scale(1.22) translate(-14.6 -534.6)"><path d="M11.2 532.4 c0.8-0.4 1.4 0 2 1 v-3 c0-0.8 1.1-0.8 1.2 0 v-1 c0-0.8 1.2-0.8 1.2 0 v0.6 c0-0.8 1.2-0.8 1.2 0 v1.2 c0-0.8 1.1-0.8 1.1 0 v4 c0 2.4-1.4 4-3.4 4 c-1.8 0-2.8-1-3.6-2.8 c-0.6-1.4-1.2-2.6-1.4-3.2z" fill="#ececec" stroke="#2e2e2e" stroke-width="0.7"/></g><circle cx="14.7" cy="553.9" r="4.8" stroke-width="1.5"/><path d="M18.3 557.4 L23.4 562.2" stroke-width="2.1" stroke-linecap="round"/><path d="M12 552.6 c0.6-1.4 1.8-2.2 3.2-2.2" stroke-width="0.8" stroke="#9a9a9a"/></g><rect x="6.6" y="598.6" width="6" height="6" fill="#ececec"/><rect x="3.9" y="596" width="6.2" height="6.2" fill="#111" stroke="#ececec" stroke-width="1.1"/><path d="M21.4 598.2 h4 v4.4" fill="none" stroke="#ececec" stroke-width="1.3"/><path d="M19 598.2 l2.8-2.2 v4.4z M25.4 605 l-2.2-2.8 h4.4z" fill="#ececec"/><rect x="13" y="620" width="16" height="16" fill="#a9a9a9" stroke="#e6e6e6" stroke-width="1.2"/><rect x="3.3" y="610.9" width="16.4" height="16.2" fill="#0df094" stroke="#dcdcdc" stroke-width="1.1"/><defs><linearGradient id="tg" x1="0" x2="1" y1="0" y2="0"><stop offset="0" stop-color="#1c1c1c"/><stop offset="1" stop-color="#c8c8c8"/></linearGradient></defs></svg>
<svg class="a" style="left:0;top:0" width="1200" height="80" viewBox="0 0 1200 80"><path d="M24.3 29.6 L32.2 37.6 H30 V42.8 H25.8 V38 H22.8 V42.8 H18.6 V37.6 H16.4z" fill="#f4f4f4"/><path transform="translate(44.9 -52.6)" d="M16.6 82.2 l2.7 3.3 h-1.9 v2.7 h2.7 v-1.9 l3.3 2.7 -3.3 2.7 v-1.9 h-2.7 v2.7 h1.9 l-2.7 3.3 -2.7-3.3 h1.9 v-2.7 h-2.7 v1.9 l-3.3-2.7 3.3-2.7 v1.9 h2.7 v-2.7 h-1.9z" fill="#f0f0f0"/><path d="M77.3 35.4 l3.2 3 3.2-3" fill="none" stroke="#b8b8b8" stroke-width="1.2"/><path d="M212.9 35.6 l2.9 2.8 2.9-2.8" fill="none" stroke="#b8b8b8" stroke-width="1.2"/><path d="M292.6 61.4 l5.4 5.4 M298 61.4 l-5.4 5.4" fill="none" stroke="#9a9a9a" stroke-width="1"/><g fill="#a0a0a0"><rect x="380.9" y="29" width="1.3" height="14"/><rect x="383" y="32.5" width="6.5" height="3"/><rect x="383" y="38" width="10" height="3"/><rect x="409.4" y="29" width="1.3" height="14"/><rect x="406.8" y="32.5" width="6.5" height="3"/><rect x="405" y="38" width="10" height="3"/><rect x="437.9" y="29" width="1.3" height="14"/><rect x="430.8" y="32.5" width="6.3" height="3"/><rect x="427" y="38" width="10.1" height="3"/><rect x="457" y="31.4" width="14" height="1.2"/><rect x="457" y="39.9" width="14" height="1.2"/><rect x="459.5" y="35.3" width="9.5" height="3"/><rect x="496.3" y="30.7" width="12" height="1.2"/><rect x="498" y="32.7" width="3.8" height="10"/><rect x="503.6" y="32.7" width="3.4" height="6.6"/><rect x="520" y="36.4" width="12" height="1.2"/><rect x="521.4" y="32" width="3.6" height="10"/><rect x="527.3" y="34" width="3.4" height="6"/><rect x="543" y="40.7" width="12.6" height="1.2"/><rect x="545" y="30.3" width="3.4" height="9.7"/><rect x="550.4" y="34" width="3.6" height="6"/><rect x="575.1" y="29.3" width="1.2" height="14.7"/><rect x="583.4" y="29.3" width="1.2" height="14.7"/><rect x="578" y="32" width="3.7" height="9.3"/></g><g fill="#f2f2f2"><circle cx="613.3" cy="36.7" r="1.9"/><circle cx="618.8" cy="36.7" r="1.9"/><circle cx="624.3" cy="36.7" r="1.9"/></g><g fill="none" stroke="#858585" stroke-width="1.1"><circle cx="710.4" cy="34.4" r="3.6"/><path d="M706.8 33 c-4 0.4-6.6 2.6-5.4 5 c0.8 1.6 3 2.4 5.6 2.6 M714 35 c2.6 1.2 4 3 2.6 4.8 c-0.8 1-2.2 1.5-4 1.7"/><path d="M704.4 39 l3.6 2 -3.8 1.4z" fill="#858585" stroke="none"/><circle cx="732.6" cy="36.2" r="3.2"/><circle cx="732.6" cy="36.2" r="1.4" stroke-width="0.8"/><path d="M728 30.8 a7 7 0 1 1 -2.2 3.4"/><path d="M726.4 30.2 l3.6-0.6 -1.4 3.4z" fill="#858585" stroke="none"/><path d="M755.3 29.2 l2.8 2.8 -1.6 1.4 v1.4 h1.6 l1.4-1.6 2.8 2.8 -2.8 2.8 -1.4-1.6 h-1.6 v1.4 l1.6 1.4 -2.8 2.8 -2.8-2.8 1.6-1.4 v-1.4 h-1.6 l-1.4 1.6 -2.8-2.8 2.8-2.8 1.4 1.6 h1.6 v-1.4 l-1.6-1.4z" stroke-width="1"/><path d="M779.3 32.4 l3.6 3.6 -3.6 3.6 -3.6-3.6z"/><path d="M779.3 29.2 l1.6 2 h-3.2z M779.3 43 l2.2-2.6 h-4.4z M771.8 36 l2.6-2 v4z M786.8 36 l-2.6-2 v4z" fill="#858585" stroke="none"/><rect x="794.5" y="33" width="6.4" height="6.4" fill="#858585" stroke="none"/><path d="M801 36.2 l2.4-2.4 v4.8z" fill="#858585" stroke="none"/><path d="M810.6 30.6 l-5 5.6 5 5.6" stroke-width="1"/></g></svg>
<svg class="a" style="left:0;top:0" width="1200" height="630" viewBox="0 0 1200 630"><rect x="270.9" y="229.5" width="167.1" height="266.2" rx="1.2" fill="none" stroke="#6c6c6c" stroke-width="1.4"/><polygon points="307.4,274.3 312.2,268.6 317.0,263.3 322.7,259.0 328.4,256.2 336.0,254.5 345.5,253.8 353.1,253.8 357.9,253.3 361.7,251.0 368.4,248.4 376.0,247.1 379.8,246.9 392.0,250.0 408.0,262.0 418.0,282.0 417.0,304.6 405.8,312.7 405.2,325.4 402.0,338.1 395.7,348.2 388.1,358.4 380.5,368.5 375.8,374.8 373.5,371.0 373.3,363.5 380.0,362.0 384.0,346.0 372.8,341.9 373.5,336.8 372.8,329.2 374.7,323.5 372.2,320.3 372.8,315.9 377.3,312.7 374.5,305.0 369.8,298.1 374.1,295.2 371.2,292.9 364.1,288.6 367.0,286.7 360.8,282.9 352.2,280.5 357.0,277.6 355.0,275.7 349.3,272.9 341.7,271.0 332.7,270.0 331.2,267.1 324.6,268.6 318.1,272.2 318.9,268.1 312.4,270.4" fill="#17252c" stroke="#17252c" stroke-width="0.9" stroke-linejoin="round"/><path d="M369.3 344.1 L372.6 342.2 L375.0 340.6 Q377.3 339.0 379.5 337.6 Q381.6 336.2 385.1 335.9 Q388.6 335.7 390.4 338.5 Q392.2 341.3 391.5 346.1 Q390.8 351.0 388.5 355.0 Q386.2 359.0 382.0 360.9 Q377.7 362.7 375.5 363.2 L373.3 363.7 L369.6 362.9 L366.0 362.0 L366.0 354.0 L366.0 346.0 L369.3 344.1z" fill="#fff"/><path d="M370.4 259.0 Q363.1 254.9 369.3 255.1 Q375.6 255.3 378.3 256.7 L380.9 258.0 L379.5 252.6 Q378.0 247.1 378.7 244.0 Q379.3 240.8 382.3 243.8 Q385.3 246.8 386.3 248.0 L387.3 249.1 L388.9 247.1 Q390.5 245.0 392.1 247.1 L393.6 249.1 L394.8 247.0 Q396.0 245.0 397.8 240.6 Q399.5 236.3 400.7 240.2 L401.9 244.1 L405.3 241.1 Q408.8 238.1 409.1 242.4 L409.5 246.6 L412.6 248.3 Q415.8 250.0 419.9 250.9 Q424.0 251.7 423.4 254.2 L422.8 256.7 L427.1 258.5 Q431.4 260.3 430.0 262.9 L428.5 265.6 L433.1 267.7 Q437.7 269.7 435.0 272.8 L432.3 275.8 L435.5 279.8 Q438.6 283.8 435.2 285.2 L431.7 286.6 L433.9 290.5 Q436.1 294.4 431.7 294.3 L427.3 294.2 L426.2 298.5 Q425.1 302.8 423.0 301.1 L420.9 299.3 L420.8 304.7 Q420.7 310.1 417.5 304.8 Q414.2 299.5 412.5 298.8 L410.8 298.0 L409.3 304.0 Q407.8 309.9 405.5 304.6 Q403.2 299.3 402.6 296.1 L401.9 292.9 L400.1 296.6 Q398.3 300.2 398.0 294.5 Q397.8 288.7 394.1 285.4 Q390.5 282.0 390.5 280.5 L390.5 279.0 L386.3 278.9 Q382.1 278.9 380.8 275.6 Q379.5 272.4 381.2 270.3 L382.8 268.2 L374.3 268.4 Q365.9 268.6 371.8 265.9 L377.8 263.1 L370.4 259.0z" fill="#8de2a6" stroke="#8de2a6" stroke-width="0.7" stroke-linejoin="round"/><path d="M388.6 267.3 L386.0 266.9 L386.1 264.0 Q386.2 261.1 389.4 259.9 Q392.5 258.7 396.6 258.5 Q400.6 258.4 404.6 260.5 Q408.5 262.6 411.9 265.6 Q415.3 268.5 417.2 272.1 Q419.2 275.8 419.6 279.6 Q419.9 283.3 417.9 285.6 L415.8 287.8 L413.4 286.3 Q411.0 284.7 408.6 288.5 L406.3 292.3 L406.6 286.6 Q406.9 280.9 404.5 283.0 L402.0 285.0 L402.2 280.8 Q402.4 276.6 399.9 278.1 L397.5 279.5 L397.4 275.4 Q397.2 271.2 394.9 272.4 L392.5 273.5 L391.8 270.6 Q391.1 267.6 388.6 267.3z" fill="#17252c" stroke="#17252c" stroke-width="0.8" stroke-linejoin="round"/><path d="M310.3 393 C321 393 332 390.5 339 387.5 C329 394 320 399 315 404.5z" fill="#17252c"/><g fill="none" stroke="#15191c" stroke-width="1.25" stroke-linecap="round" stroke-linejoin="round"><path d="M307.4 274.3 C304.6 277.4 303 280.4 301.7 282.9 C299.4 286.4 297.4 289.8 295.8 295 C294 298.4 292.2 301.4 290.7 303.9 C289.4 306 288.2 307.6 287.5 309 C286.9 310.2 286.7 311.6 286.9 312.8 C287.2 314.4 287.8 315.8 288.2 317.2 C288.4 319.6 288 322 287.5 324.2 C286.4 327 285.2 329.4 284.3 331.8 C283.4 335.6 283 339.4 283.1 343.2 C283.2 347.2 283.6 351 284.3 354.6 C285.2 358.6 286.3 362.4 287.5 366 C288.6 369.4 289.6 372.4 290.7 375 C292 379 293 382 294.2 384 C297 389.5 303 392.5 310.3 392.8 C318 393 328 391.5 339 387.2 C348 383.5 355 378.5 359.7 373.4 C363 369.5 365.6 365 366.8 360.6"/><path d="M366.8 360.8 L373.2 363.4 M373 341.8 L377.4 339.2" stroke-width="1"/><path d="M315 404.5 C318 412 321 419.5 324 426.3 C327 433.5 329.5 440 331.5 446 C332.8 450 333.6 453.5 334 456.4"/><path d="M324 426.3 C319 426 314 426.2 309.1 426.8 C303.5 427.8 299 429.6 295.3 432.1 C291.5 435 289 438.5 287.3 442.4 C285 449 283.6 456 282.7 463.1 C281.2 474 280 485 279.2 495.3"/><path d="M302.7 460.8 C302.2 465.5 302.1 470 302.2 474.6 C302.6 481.5 303.4 488.5 304.5 495.3"/><path d="M368.9 428.2 C366.5 432 363.5 435 359.7 437.8 C355 441.5 350 445 345.9 449.3 C342.5 453.5 340 458 337.9 463.1 C336.2 467.5 335 471.5 334.4 475.8"/><path d="M374.6 375.4 C372 378 370.6 380.5 370 383 C369 386 368.8 389 369 391.8 C369.6 395.5 370.8 398.5 372.6 401 C376.5 405.5 380.5 409 385 412.5 C390.5 418 396 423.5 401.1 428.6 C406 434 410.5 439.3 414.9 444.7 C418 449 420.8 453.5 423 458.5 C425.2 464.5 426.6 470.5 427.6 476.9 C428.6 483 429.4 489 429.9 495.3"/><path d="M307.3 314.1 C307.2 317 306.6 319.5 305.2 321.8 C303 324.8 300 327 297 329.6 C294.8 331.6 293.2 333.5 293 335.8 C293 338.4 294 340.4 295.6 342 C296.8 343.2 298 344 299.4 344.3"/><path d="M295.4 355.4 C298.5 355.6 302 357 306.5 357.9 C310.5 358.5 314.5 358.4 318.4 357.7"/><path d="M298.6 362.5 C300 364.2 302 365.4 304.1 365.7 C306.2 366 308 365.6 309.7 364.9"/><path d="M290 319.8 C293 317.8 296.4 316.4 299.6 315.8 C301.8 315.4 303.8 315.3 305.4 315.3" stroke-width="1.9"/><path d="M293.6 315.2 C297 314 300.6 313.5 304 313.7 C305 313.8 305.8 313.9 306.6 314" stroke-width="0.9"/><path d="M324.3 322.4 C327.4 320.6 330.6 319.2 333.8 318.7 C337 318.5 340 319.6 342.6 321.4 C343.8 322.4 345 323.4 345.9 324.2" stroke-width="1.9"/><path d="M327.5 317.8 C330 316.4 332.6 315.5 335.1 315.3 C338.4 315.3 341.4 316.8 344 319.1" stroke-width="0.9"/></g><path d="M304.6 342.4 C306.6 342.3 308.8 343 310.6 344.2 C308.4 344.8 306.2 344.4 304.6 342.4z" fill="#15191c" stroke="#15191c" stroke-width="1.3" stroke-linejoin="round"/><ellipse cx="300.8" cy="319.6" rx="3" ry="3.1" fill="#15191c"/><ellipse cx="337.4" cy="323.2" rx="3.1" ry="3" fill="#15191c"/><path d="M288.8 308.4 C290 306.2 291.4 305 293.2 304.3 C295.4 303.4 297.6 303 299.6 303.2 C301.6 303.6 303 304.4 304 305.8 C304.8 307 305.2 308.2 305.3 309.6 C304.6 308.8 303.8 308.4 302.7 308.1 C301.2 307.2 299.8 306.6 298.3 306.4 C296.6 306.2 294.8 306.3 293.2 306.7 C291.6 307.2 290.2 307.8 288.8 308.4z" fill="#15191c" stroke="#15191c" stroke-width="0.5" stroke-linejoin="round"/><path d="M319.4 305.6 C319.6 304.6 320.6 304.2 322 304.2 C324.4 304 326.6 304 328.8 304.1 C332.4 304.2 335.8 304.5 338.9 305.2 C342.2 306.4 345 308.4 347.2 310.9 C350 314.2 352.6 317.8 354.8 321.6 C352 318.8 349.4 316.2 346.5 314 C344 312 341.6 310 338.9 308.9 C335.6 308.3 332.2 308.2 328.8 308.3 C326 308.5 323.2 308.7 320.5 308.7 C319.4 308.2 319.2 306.8 319.4 305.6z" fill="#15191c" stroke="#15191c" stroke-width="0.5" stroke-linejoin="round"/></svg>
<div class="a" style="left:1198.5px;top:93px;width:1.5px;height:537px;background:#262626"></div>
<div class="a" id="pm"></div>
<div class="ps" style="top:315px"></div>
<div class="ps" style="top:364px"></div>
<div class="ps" style="top:432px"></div>
<span class="t" style="left:916.00px;top:200.48px;font-size:11.5px;color:#000;letter-spacing:0.007px;">New Layer...</span>
<span class="t" style="left:916.00px;top:219.48px;font-size:11.5px;color:#8a8a8a;letter-spacing:-0.273px;">Copy CSS</span>
<span class="t" style="left:916.00px;top:238.48px;font-size:11.5px;color:#8a8a8a;letter-spacing:-0.353px;">Copy SVG</span>
<span class="t" style="left:916.00px;top:276.48px;font-size:11.5px;color:#000;letter-spacing:-0.100px;">Delete Layer</span>
<span class="t" style="left:916.00px;top:295.48px;font-size:11.5px;color:#8a8a8a;letter-spacing:0.021px;">Delete Hidden Layers</span>
<span class="t" style="left:916.00px;top:325.48px;font-size:11.5px;color:#000;letter-spacing:-0.015px;">Quick Export as PNG</span>
<span class="t" style="left:916.00px;top:344.48px;font-size:11.5px;color:#000;letter-spacing:0.017px;">Export As...</span>
<span class="t" style="left:916.00px;top:374.48px;font-size:11.5px;color:#000;letter-spacing:0.105px;">New Group...</span>
<span class="t" style="left:916.00px;top:393.48px;font-size:11.5px;color:#000;letter-spacing:0.098px;">New Group from Layers...</span>
<span class="t" style="left:916.00px;top:412.48px;font-size:11.5px;color:#000;letter-spacing:0.106px;">Collapse All Groups</span>
<span class="t" style="left:916.00px;top:442.48px;font-size:11.5px;color:#000;letter-spacing:0.250px;">New Artboard...</span>
<span class="t" style="left:916.00px;top:461.48px;font-size:11.5px;color:#8a8a8a;letter-spacing:0.271px;">Artboard from Group...</span>
<span class="t" style="left:916.00px;top:480.48px;font-size:11.5px;color:#000;letter-spacing:0.148px;">Artboard from Layers...</span>
<span class="t" style="left:916.00px;top:499.48px;font-size:11.5px;color:#000;letter-spacing:0.015px;">Frame from Layers...</span>
<div class="a" id="hl"></div>
<span class="t" style="left:916.00px;top:257.48px;font-size:11.5px;color:#fff;letter-spacing:0.064px;">Duplicate Layer...</span>
<span class="t" style="left:1033.50px;top:200.48px;font-size:11.5px;color:#000;letter-spacing:0.381px;">Shift+Ctrl+N</span>
<span class="t" style="left:1039.00px;top:325.48px;font-size:11.5px;color:#000;letter-spacing:0.431px;">Shift+Ctrl+'</span>
<span class="t" style="left:1016.00px;top:344.48px;font-size:11.5px;color:#000;letter-spacing:0.502px;">Alt+Shift+Ctrl+'</span>
<div class="a" id="lp"></div><div class="a" id="lpb"></div><div class="a" id="lt"></div>
<span class="t" style="left:907.00px;top:525.51px;font-size:10px;color:#f2f2f2;letter-spacing:-0.374px;font-weight:bold;">Layers</span>
<span class="t" style="left:954.00px;top:525.51px;font-size:10px;color:#9a9a9a;letter-spacing:-0.376px;font-weight:bold;">Channels</span>
<span class="t" style="left:1013.50px;top:525.51px;font-size:10px;color:#9a9a9a;letter-spacing:-0.346px;font-weight:bold;">Paths</span>
<svg class="a" style="left:0;top:0" width="1200" height="630" viewBox="0 0 1200 630"><g fill="#bdbdbd"><rect x="1166" y="526.9" width="10" height="1.2"/><rect x="1166" y="529" width="10" height="1.2"/><rect x="1166" y="531.1" width="10" height="1.2"/><rect x="1166" y="533.2" width="10" height="1.2"/></g><ellipse cx="1169.4" cy="531" rx="27.9" ry="13" fill="none" stroke="#12ef98" stroke-width="5.5"/><polygon transform="matrix(0.682,-0.731,0.731,0.682,1083.2,612.2)" points="2.3,-2.95 36.3,-2.95 36.3,-11.56 71.02,0 36.3,11.56 36.3,2.95 2.3,2.95" fill="#fff" stroke="#12ef98" stroke-width="4.6" stroke-linejoin="miter" stroke-miterlimit="10"/></svg>
</div></body></html>
